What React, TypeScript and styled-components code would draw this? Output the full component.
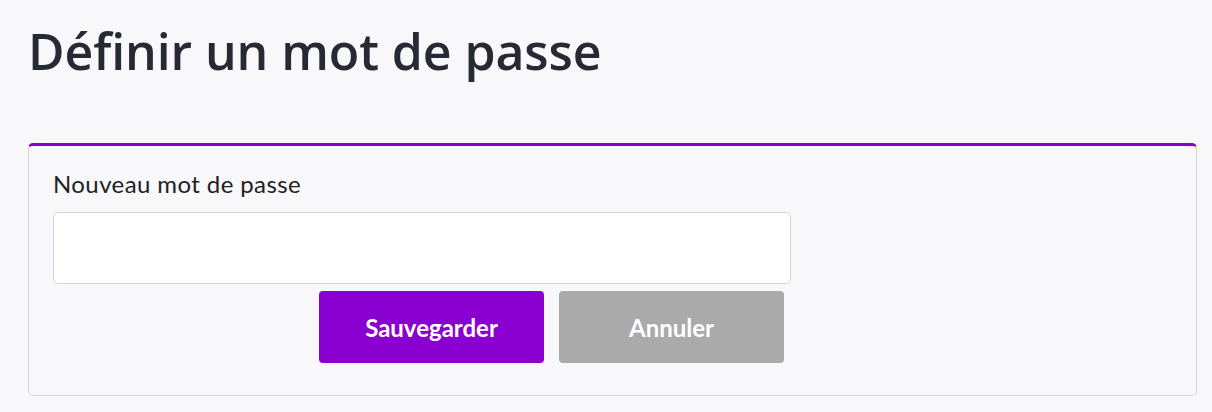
import * as React from 'react'
import styled, { createGlobalStyle } from 'styled-components'

const GlobalStyle = createGlobalStyle`
  html, body {
    margin: 0;
    padding: 0;
    background: #f8f8fa;
    font-family: Lato, "Open Sans", sans-serif;
  }
`

const Page = styled.div`
  padding: 12px 15px 16px 28px;
`

const Title = styled.h1`
  margin: 0 0 53px 0;
  font-family: "Open Sans", Lato, sans-serif;
  font-size: 50px;
  font-weight: 600;
  line-height: 78px;
  color: #272a35;
  letter-spacing: -0.1px;
`

const Card = styled.div`
  border: 1px solid #d5d5dd;
  border-top: 3px solid #8a00d0;
  border-radius: 5px;
  padding: 22px 24px 32px 24px;
`

const Form = styled.form`
  width: 738px;
  display: flex;
  flex-direction: column;
`

const Label = styled.label`
  font-size: 24px;
  letter-spacing: 0.4px;
  color: #222;
  line-height: 32px;
  margin-bottom: 12px;
`

const Input = styled.input`
  box-sizing: border-box;
  height: 72px;
  border: 1px solid #d3d3da;
  border-radius: 5px;
  background: #fff;
  outline: none;
  font-size: 20px;
  padding: 0 16px;
`

const Actions = styled.div`
  display: flex;
  justify-content: flex-end;
  gap: 15px;
  margin-top: 7px;
  padding-right: 7px;
`

const Button = styled.button<{ $variant: 'primary' | 'secondary' }>`
  width: 225px;
  height: 72px;
  border: none;
  border-radius: 4px;
  background: ${p => (p.$variant === 'primary' ? '#8a00d0' : '#aaaaaa')};
  color: #fff;
  font-family: Lato, sans-serif;
  font-size: 24px;
  font-weight: 700;
  cursor: pointer;
`

const App = () => (
  <>
    <GlobalStyle />
    <Page>
      <Title>Définir un mot de passe</Title>
      <Card>
        <Form onSubmit={e => e.preventDefault()}>
          <Label htmlFor="pw">Nouveau mot de passe</Label>
          <Input id="pw" type="password" />
          <Actions>
            <Button type="submit" $variant="primary">Sauvegarder</Button>
            <Button type="button" $variant="secondary">Annuler</Button>
          </Actions>
        </Form>
      </Card>
    </Page>
  </>
)

export default App
